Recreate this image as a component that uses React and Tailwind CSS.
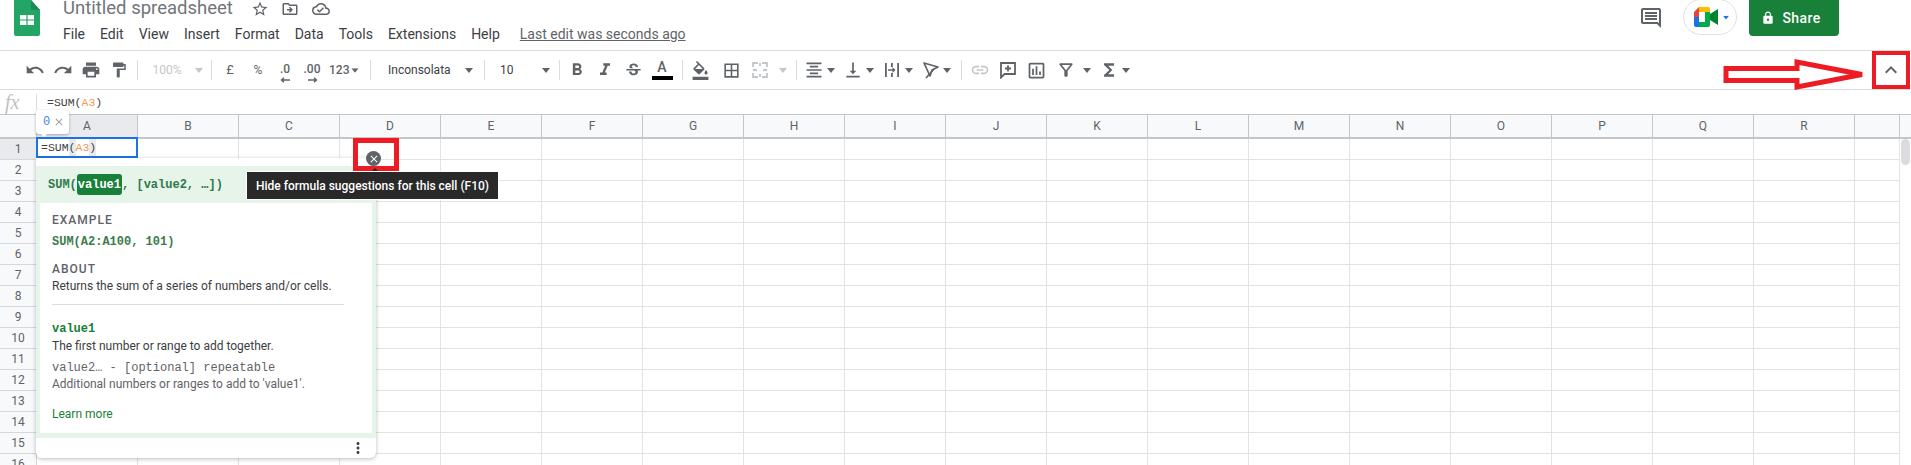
import React from 'react';
import {
  MdUndo, MdRedo, MdPrint, MdFormatPaint, MdFormatBold, MdFormatItalic, MdStrikethroughS,
  MdFormatColorFill, MdBorderAll, MdFormatAlignCenter, MdVerticalAlignBottom, MdLink,
  MdOutlineInsertChart, MdOutlineFilterAlt, MdFunctions, MdStarBorder, MdOutlineDriveFileMove,
  MdOutlineCloudDone, MdOutlineComment, MdLock, MdExpandLess, MdClose, MdMoreVert,
} from 'react-icons/md';

const columns = ['A', 'B', 'C', 'D', 'E', 'F', 'G', 'H', 'I', 'J', 'K', 'L', 'M', 'N', 'O', 'P', 'Q', 'R'];
const rows = Array.from({ length: 16 }, (_, i) => i + 1);
const menus = ['File', 'Edit', 'View', 'Insert', 'Format', 'Data', 'Tools', 'Extensions', 'Help'];

const Sep = ({ className = '' }) => <div className={`w-px h-[20px] bg-[#dadce0] shrink-0 ${className}`} />;

const Caret = ({ className = '', color = '#5f6368' }) => (
  <svg width="10" height="5" viewBox="0 0 10 5" className={`shrink-0 ${className}`}>
    <path d="M1 0h8L5 5z" fill={color} />
  </svg>
);

const Slot = ({ className = 'w-[28px]', children }) => (
  <div className={`h-[28px] flex items-center justify-center shrink-0 ${className}`}>{children}</div>
);

function SheetsLogo() {
  return (
    <svg width="26" height="36" viewBox="0 0 26 36">
      <path d="M0 0h17l9 10v24a2 2 0 0 1-2 2H2a2 2 0 0 1-2-2z" fill="#23a566" />
      <path d="M17 0l9 10h-9z" fill="#1c8a55" />
      <path d="M6 15h14v10H6z" fill="#fff" />
      <path d="M12.4 15h1.2v10h-1.2zM6 19.4h14v1.2H6z" fill="#23a566" />
    </svg>
  );
}

function MeetLogo() {
  return (
    <svg width="24" height="20" viewBox="0 0 24 20">
      <path d="M5 0h9v5H5v5H0V5z" fill="#ea4335" />
      <path d="M5 0h9a2 2 0 0 1 2 2v5h-5V5H5z" fill="#fbbc04" />
      <path d="M0 10h5v5h0v5H2a2 2 0 0 1-2-2z" fill="#1a73e8" />
      <path d="M5 15h6v-3h5v6a2 2 0 0 1-2 2H5z" fill="#00ac47" />
      <path d="M16 7l8-5v16l-8-5z" fill="#00832d" />
      <path d="M11 5h5v10h-5z" fill="#00ac47" />
    </svg>
  );
}

function Header() {
  return (
    <div className="h-[51px] border-b border-[#dadce0] flex pl-[14px] pr-[72px] shrink-0">
      <SheetsLogo />
      <div className="ml-[23px] flex flex-col">
        <div className="flex items-center h-[17px] text-[#70757a]">
          <span className="text-[18.500px] leading-[17px] w-[186px]">Untitled spreadsheet</span>
          <MdStarBorder size={18} className="text-[#5f6368] ml-[2px]" />
          <MdOutlineDriveFileMove size={18} className="text-[#5f6368] ml-[12px]" />
          <MdOutlineCloudDone size={18} className="text-[#5f6368] ml-[13px]" />
        </div>
        <div className="flex items-center mt-[8px] h-[18px] text-[14px] text-[#3c4043]">
          <div className="flex gap-[15px]">
            {menus.map((m) => <span key={m}>{m}</span>)}
          </div>
          <span className="ml-[20px] text-[#5f6368] underline">Last edit was seconds ago</span>
        </div>
      </div>
      <div className="ml-auto flex items-start">
        <MdOutlineComment size={24} className="text-[#5f6368] mt-[6px]" />
        <div className="ml-[20px] w-[54px] h-[36px] border border-[#e0e0e0] rounded-[18px] -mt-px flex items-center pl-[10px]">
          <MeetLogo />
          <Caret color="#1a73e8" className="ml-[3px] scale-75" />
        </div>
        <div className="ml-[12px] w-[90px] h-[36px] bg-[#188038] rounded-b-[4px] flex items-center justify-center pr-[6px] text-white text-[14px] font-medium">
          <MdLock size={14} />
          <span className="ml-[7px] tracking-[0.4px]">Share</span>
        </div>
      </div>
    </div>
  );
}

function Toolbar() {
  return (
    <div className="h-[39px] border-b border-[#dadce0] flex items-center pl-[21px] text-[#5f6368] shrink-0">
      <Slot><MdUndo size={20} /></Slot>
      <Slot><MdRedo size={20} /></Slot>
      <Slot><MdPrint size={20} /></Slot>
      <Slot><MdFormatPaint size={18} /></Slot>
      <Sep className="ml-[4px]" />

      <div className="w-[73px] flex items-center pl-[14px] text-[12px] text-[#c4c7c9]">
        <span className="w-[30px] text-center">100%</span>
        <Caret color="#c4c7c9" className="ml-[12px]" />
      </div>
      <Sep />

      <Slot className="ml-[4px] w-[28px] text-[13px]">£</Slot>
      <Slot className="w-[28px] text-[12px]">%</Slot>
      <Slot className="w-[26px] relative text-[12px] font-medium">
        <span className="-mt-[2px]">.0</span>
        <svg width="10" height="6" viewBox="0 0 10 6" className="absolute bottom-[1px] left-[8px]"><path d="M10 3H2M4 .8L1.5 3 4 5.2" stroke="#5f6368" strokeWidth="1.4" fill="none" /></svg>
      </Slot>
      <Slot className="w-[28px] relative text-[12px] font-medium">
        <span className="-mt-[2px]">.00</span>
        <svg width="10" height="6" viewBox="0 0 10 6" className="absolute bottom-[1px] left-[10px]"><path d="M0 3h8M6 .8L8.500 3 6 5.200" stroke="#5f6368" strokeWidth="1.400" fill="none" /></svg>
      </Slot>
      <div className="w-[44px] flex items-center pl-[3px] text-[12px] font-medium">
        <span className="w-[22px]">123</span>
        <Caret className="ml-[-1px] scale-90" />
      </div>
      <Sep />

      <div className="w-[113px] flex items-center pl-[17px] text-[12px] text-[#3c4043]">
        <span className="w-[63px]">Inconsolata</span>
        <Caret className="ml-[13px]" />
      </div>
      <Sep />

      <div className="w-[74px] flex items-center pl-[15px] text-[12px] text-[#3c4043]">
        <span className="w-[14px]">10</span>
        <Caret className="ml-[27px]" />
      </div>
      <Sep />

      <Slot className="ml-[3px] w-[28px]"><MdFormatBold size={20} /></Slot>
      <Slot><MdFormatItalic size={20} /></Slot>
      <Slot><MdStrikethroughS size={19} /></Slot>
      <Slot className="ml-px w-[28px] flex-col">
        <span className="text-[14px] leading-[15px] font-medium text-[#5f6368]">A</span>
        <div className="w-[21px] h-[4px] bg-black mt-[1px]" />
      </Slot>
      <Sep className="ml-[6px]" />

      <Slot className="ml-[3px] w-[28px]"><MdFormatColorFill size={19} /></Slot>
      <Slot className="ml-[3px] w-[28px]"><MdBorderAll size={19} /></Slot>
      <Slot className="ml-px w-[28px]">
        <svg width="16" height="16" viewBox="0 0 16 16" fill="none" stroke="#c4c7c9" strokeWidth="1.800">
          <path d="M1 5V1h5M10 1h5v4M15 11v4h-5M6 15H1v-4" />
          <path d="M1 8h4M11 8h4M8 1v3M8 12v3" />
        </svg>
      </Slot>
      <Caret color="#c4c7c9" className="ml-[4px]" />
      <Sep className="ml-[8px]" />

      <Slot className="ml-[7px] w-[20px]"><MdFormatAlignCenter size={20} /></Slot>
      <Caret className="ml-[2px]" />
      <Slot className="ml-[7px] w-[20px]"><MdVerticalAlignBottom size={20} /></Slot>
      <Caret className="ml-[2px]" />
      <Slot className="ml-[7px] w-[20px]">
        <svg width="18" height="18" viewBox="0 0 18 18" fill="#5f6368">
          <path d="M2 2h1.800v14H2zM8 2h1.800v4H8zM8 12h1.800v4H8zM14.200 2H16v14h-1.800z" />
          <path d="M5 8.200h4.500V6l3 3-3 3V9.800H5z" />
        </svg>
      </Slot>
      <Caret className="ml-[2px]" />
      <Slot className="ml-[7px] w-[20px]">
        <svg width="18" height="18" viewBox="0 0 18 18" fill="none" stroke="#5f6368" strokeWidth="1.700">
          <path d="M2 2l14 4-6 3-2 6z" strokeLinejoin="round" />
          <path d="M12 8l-8 9" />
        </svg>
      </Slot>
      <Caret className="ml-px" />
      <Sep className="ml-[9px]" />

      <Slot className="ml-[4px] w-[28px]"><MdLink size={20} className="text-[#c4c7c9]" /></Slot>
      <Slot>
        <svg width="18" height="18" viewBox="0 0 18 18" fill="none" stroke="#5f6368" strokeWidth="1.800">
          <path d="M2 2h14v11H5.500L2 16.500z" />
          <path d="M9 4.500v6M6 7.500h6" />
        </svg>
      </Slot>
      <Slot><MdOutlineInsertChart size={21} /></Slot>
      <Slot className="ml-[6px] w-[20px]"><MdOutlineFilterAlt size={20} /></Slot>
      <Caret className="ml-[6px]" />
      <Slot className="ml-[7px] w-[20px]"><MdFunctions size={20} /></Slot>
      <Caret className="ml-[2px]" />
    </div>
  );
}

function FormulaBar() {
  return (
    <div className="h-[24px] flex items-center shrink-0 relative">
      <span className="w-[36px] pl-[5px] text-[20px] leading-[24px] italic text-[#bdc1c6] font-['Liberation_Serif',serif]">fx</span>
      <div className="w-px h-[16px] bg-[#dadce0]" />
      <span className="ml-[10px] pt-[2px] text-[11.500px] font-['Liberation_Mono',monospace] text-[#3c4043]">
        =SUM(<span className="text-[#f6994f]">A3</span>)
      </span>
    </div>
  );
}

function Sheet() {
  return (
    <div className="flex flex-col flex-1 min-h-0 overflow-hidden">
      <div className="h-[25px] flex border-t border-b-2 border-[#c4c7c9] bg-[#f8f9fa] text-[12px] text-[#5f6368] shrink-0">
        <div className="w-[37px] border-r border-[#c4c7c9] shrink-0" />
        {columns.map((c) => (
          <div key={c} className={`w-[101px] shrink-0 border-r border-[#c4c7c9] flex items-center justify-center ${c === 'A' ? 'bg-[#e8eaed]' : ''}`}>{c}</div>
        ))}
        <div className="w-[45px] border-r border-[#c4c7c9] shrink-0" />
      </div>
      {rows.map((r) => (
        <div key={r} className="h-[21px] flex shrink-0">
          <div className={`w-[37px] shrink-0 border-r border-b border-[#d5d7da] flex items-center justify-center text-[12px] text-[#5f6368] ${r === 1 ? 'bg-[#e8eaed]' : 'bg-[#f8f9fa]'}`}>{r}</div>
          {columns.map((c) => (
            <div key={c} className="w-[101px] shrink-0 border-r border-b border-[#e2e3e3]" />
          ))}
          <div className="w-[45px] shrink-0 border-r border-b border-[#e2e3e3]" />
        </div>
      ))}
    </div>
  );
}

function FormulaHelp() {
  const mono = "font-['Liberation_Mono',monospace] text-[12px]";
  return (
    <div className="absolute left-[36px] top-[158px] w-[340px] h-[300px] bg-white rounded-b-[6px] shadow-[0_1px_4px_rgba(60,64,67,0.35)] pt-[8px] flex flex-col">
      <div className="bg-[#e6f4ea] h-[272px] px-[4px] pb-[5px] flex flex-col">
        <div className={`h-[37px] flex items-center pl-[8px] font-bold text-[#2f7a4b] ${mono}`}>
          <span>SUM(</span>
          <span className="bg-[#188038] text-white rounded-[3px] px-[1px] h-[21px] flex items-center">value1</span>
          <span>, [value2, …])</span>
        </div>
        <div className="bg-white flex-1 pl-[12px] pr-[28px] pt-[10px]">
          <div className="text-[12px] leading-[14px] font-medium tracking-[1px] text-[#5f6368]">EXAMPLE</div>
          <div className={`mt-[8px] leading-[14px] font-bold text-[#3c7b4a] ${mono}`}>SUM(A2:A100, 101)</div>
          <div className="mt-[13px] text-[12px] leading-[14px] font-medium tracking-[1px] text-[#5f6368]">ABOUT</div>
          <div className="mt-[2px] text-[12px] leading-[16px] text-[#3c4043]">Returns the sum of a series of numbers and/or cells.</div>
          <div className="mt-[10px] h-px bg-[#dadce0]" />
          <div className={`mt-[17px] leading-[14px] font-bold text-[#188038] ${mono}`}>value1</div>
          <div className="mt-[2px] text-[12px] leading-[16px] text-[#3c4043]">The first number or range to add together.</div>
          <div className={`mt-[7px] leading-[14px] text-[#5f6368] ${mono}`}>value2… - [optional] repeatable</div>
          <div className="mt-[1px] text-[12px] leading-[16px] text-[#5f6368]">Additional numbers or ranges to add to 'value1'.</div>
          <div className="mt-[14px] text-[12px] leading-[16px] text-[#188038]">Learn more</div>
        </div>
      </div>
      <div className="flex-1 flex items-center justify-end pr-[9px] text-[#3c4043]">
        <MdMoreVert size={18} />
      </div>
    </div>
  );
}

function Overlays() {
  return (
    <>
      {/* selected cell */}
      <div className="absolute left-[36px] top-[137px] w-[102px] h-[21px] border-2 border-[#1a73e8] bg-white flex items-center pl-[3px] text-[11.500px] font-['Liberation_Mono',monospace] text-[#3c4043]">
        =SUM<span className="bg-[#e8eaed]">(</span><span className="text-[#f6994f]">A3</span><span className="bg-[#e8eaed]">)</span>
      </div>

      {/* result badge */}
      <div className="absolute left-[36px] top-[110px] w-[33px] h-[24px] bg-white rounded-[3px] shadow-[0_1px_3px_rgba(60,64,67,0.4)] flex items-center pl-[7px] text-[12px] font-['Liberation_Mono',monospace] text-[#4285f4]">
        0
        <MdClose size={12} className="ml-[3px] text-[#9aa0a6]" />
      </div>
      <div className="absolute left-[40px] top-[133px] w-0 h-0 border-x-[4px] border-x-transparent border-t-[4px] border-t-white" />

      <FormulaHelp />

      {/* hide suggestions */}
      <div className="absolute left-[353px] top-[138px] w-[46px] h-[33px] border-[5px] border-[#ed1c24]" />
      <div className="absolute left-[366px] top-[151px] w-[15px] h-[15px] rounded-full bg-[#5f6368] flex items-center justify-center text-white">
        <MdClose size={12} />
      </div>
      <div className="absolute left-[371px] top-[168px] w-0 h-0 border-x-[4px] border-x-transparent border-b-[4px] border-b-[#292929]" />
      <div className="absolute left-[246px] top-[171px] w-[253px] h-[29px] bg-[#292929] border border-white flex items-center justify-center text-white text-[12px] font-medium whitespace-nowrap">
        Hide formula suggestions for this cell (F10)
      </div>

      {/* scrollbar thumb */}
      <div className="absolute left-[1901px] top-[139px] w-[9px] h-[26px] rounded-full bg-[#dadce0]" />

      {/* collapse toolbar annotation */}
      <div className="absolute left-[1872px] top-[51px] w-[38px] h-[38px] border-[4px] border-[#ed1c24] flex items-center justify-center text-[#5f6368]">
        <MdExpandLess size={24} />
      </div>
      <svg className="absolute left-[1718px] top-[55px]" width="152" height="40" viewBox="0 0 152 40">
        <path d="M8 13.500h71V7l65 12.500L79 32v-6.500H8z" fill="#fff" stroke="#ed1c24" strokeWidth="5" />
      </svg>
    </>
  );
}

export default function App() {
  return (
    <div className="relative w-[1911px] h-[465px] overflow-hidden bg-white flex flex-col font-['Roboto',sans-serif]">
      <Header />
      <Toolbar />
      <FormulaBar />
      <Sheet />
      <Overlays />
    </div>
  );
}
